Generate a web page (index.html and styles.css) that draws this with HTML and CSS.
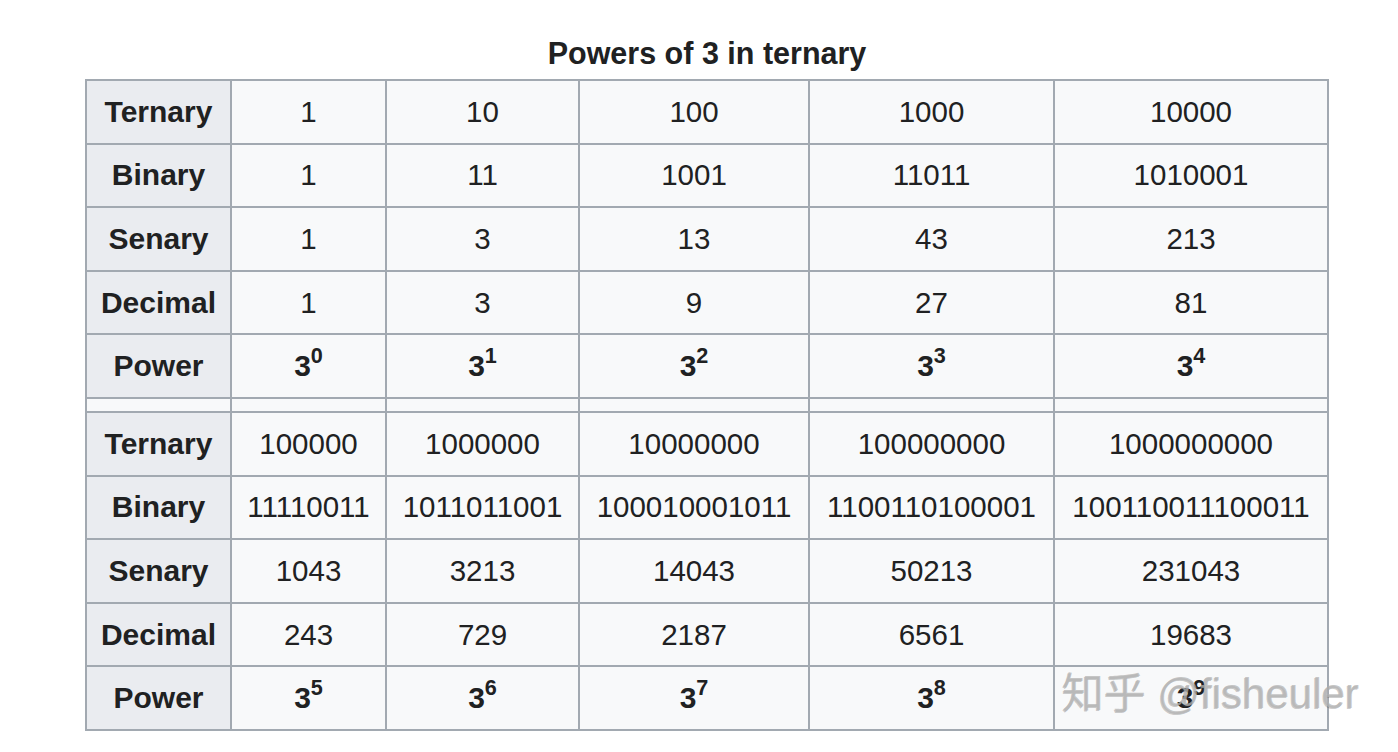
FILE: index.html
```html
<!DOCTYPE html>
<html lang="en">
<head>
<meta charset="utf-8">
<title>Powers of 3 in ternary</title>
<link rel="stylesheet" href="styles.css">
</head>
<body>
<div class="page">
  <table class="wikitable">
    <caption>Powers of 3 in ternary</caption>
    <colgroup>
      <col class="c0"><col class="c1"><col class="c2"><col class="c3"><col class="c4"><col class="c5">
    </colgroup>
    <tbody>
      <tr><th>Ternary</th><td>1</td><td>10</td><td>100</td><td>1000</td><td>10000</td></tr>
      <tr><th>Binary</th><td>1</td><td>11</td><td>1001</td><td>11011</td><td>1010001</td></tr>
      <tr><th>Senary</th><td>1</td><td>3</td><td>13</td><td>43</td><td>213</td></tr>
      <tr><th>Decimal</th><td>1</td><td>3</td><td>9</td><td>27</td><td>81</td></tr>
      <tr><th>Power</th><td class="pow">3<sup>0</sup></td><td class="pow">3<sup>1</sup></td><td class="pow">3<sup>2</sup></td><td class="pow">3<sup>3</sup></td><td class="pow">3<sup>4</sup></td></tr>
      <tr class="sep"><td></td><td></td><td></td><td></td><td></td><td></td></tr>
      <tr><th>Ternary</th><td>100000</td><td>1000000</td><td>10000000</td><td>100000000</td><td>1000000000</td></tr>
      <tr><th>Binary</th><td>11110011</td><td>1011011001</td><td>100010001011</td><td>1100110100001</td><td>100110011100011</td></tr>
      <tr><th>Senary</th><td>1043</td><td>3213</td><td>14043</td><td>50213</td><td>231043</td></tr>
      <tr><th>Decimal</th><td>243</td><td>729</td><td>2187</td><td>6561</td><td>19683</td></tr>
      <tr><th>Power</th><td class="pow">3<sup>5</sup></td><td class="pow">3<sup>6</sup></td><td class="pow">3<sup>7</sup></td><td class="pow">3<sup>8</sup></td><td class="pow">3<sup>9</sup></td></tr>
    </tbody>
  </table>
  <div class="watermark">知乎 @fisheuler</div>
</div>
</body>
</html>
```

FILE: styles.css
```css
html, body {
  margin: 0;
  padding: 0;
  background: #ffffff;
}

.page {
  position: relative;
  width: 1398px;
  height: 752px;
  padding-left: 85px;
  box-sizing: border-box;
  font-family: "Liberation Sans", Arial, sans-serif;
  color: #202122;
}

.wikitable {
  table-layout: fixed;
  width: 1244px;
  border-collapse: collapse;
  background: #f8f9fa;
}

.wikitable caption {
  font-weight: bold;
  font-size: 30.5px;
  line-height: 34px;
  padding-top: 36px;
  padding-bottom: 9px;
  text-align: center;
  color: #202122;
}

.c0 { width: 145px; }
.c1 { width: 155px; }
.c2 { width: 193px; }
.c3 { width: 230px; }
.c4 { width: 245px; }
.c5 { width: 274px; }

.wikitable tr {
  height: 63.6px;
}

.wikitable th,
.wikitable td {
  border: 2px solid #a2a9b1;
  padding: 0 8px;
  text-align: center;
  vertical-align: middle;
  white-space: nowrap;
  line-height: 34px;
}

.wikitable th {
  background: #eaecf0;
  font-weight: bold;
  font-size: 30px;
  color: #202122;
}

.wikitable td {
  background: #f8f9fa;
  font-size: 29.5px;
  color: #202122;
}

.wikitable td.pow {
  font-weight: bold;
  font-size: 30px;
}

.wikitable sup {
  font-size: 72%;
  line-height: 0;
  vertical-align: 0.6em;
}

.wikitable tr.sep {
  height: 14px;
}

.wikitable tr.sep td {
  padding: 0;
  line-height: 0;
  font-size: 0;
}

.watermark {
  position: absolute;
  left: 1062px;
  top: 669px;
  font-family: "Liberation Sans", "Noto Sans CJK SC", sans-serif;
  font-size: 42px;
  line-height: 50px;
  white-space: nowrap;
  color: rgba(180, 180, 180, 0.75);
  text-shadow: -1px 1px 0 rgba(80, 80, 80, 0.3);
}
```
